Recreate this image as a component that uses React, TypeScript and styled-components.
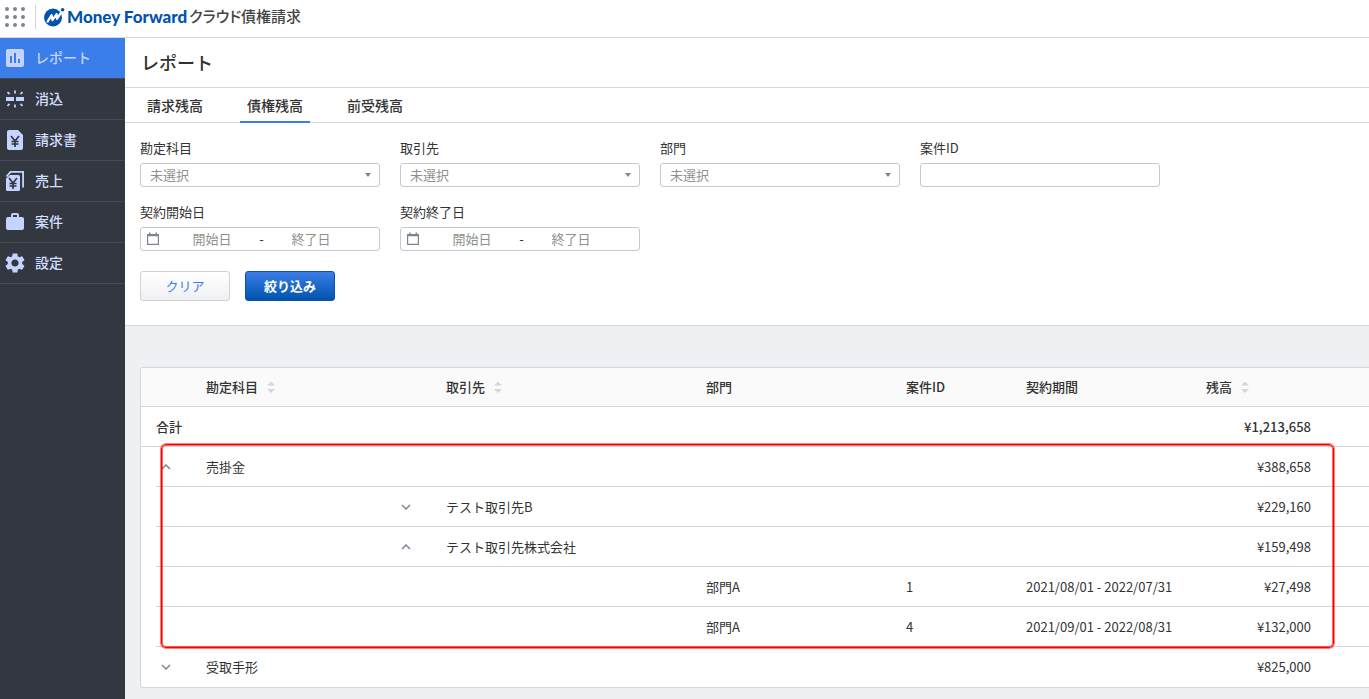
import React from "react";
import styled, { createGlobalStyle } from "styled-components";
import { MdAssessment, MdSettings } from "react-icons/md";

const GlobalStyle = createGlobalStyle`
  *, *::before, *::after { box-sizing: border-box; }
  html, body, #root { height: 100%; }
  body {
    margin: 0;
    overflow: hidden;
    background: #eff0f4;
    color: #333;
    font-family: "Noto Sans CJK JP", "Noto Sans", sans-serif;
    font-size: 13px;
    line-height: 20px;
  }
  button, input, select { font: inherit; color: inherit; }
`;

const Shell = styled.div`
  display: flex;
  flex-direction: column;
  min-height: 100%;
`;

const TopBar = styled.header`
  display: flex;
  align-items: center;
  height: 38px;
  padding: 0 4px 4px;
  background: #fff;
  border-bottom: 1px solid #d4d6db;
`;

const AppsButton = styled.button`
  display: flex;
  padding: 0;
  border: 0;
  background: none;
  svg { fill: #7d8496; }
`;

const Divider = styled.span`
  width: 1px;
  height: 24px;
  margin: 0 8px 0 9px;
  background: #d4d6db;
`;

const Brand = styled.a`
  display: flex;
  align-items: center;
  color: #0054ac;
  text-decoration: none;
`;

const BrandName = styled.span`
  margin: 0 2px;
  font-family: Lato, sans-serif;
  font-size: 17px;
  font-weight: 900;
`;

const ProductName = styled.span`
  padding-bottom: 2px;
  color: #444;
  font-size: 15px;
  font-weight: 500;
  font-feature-settings: "palt";
`;

const Body = styled.div`
  display: flex;
  flex: 1;
`;

const Sidebar = styled.nav`
  flex: 0 0 125px;
  background: #33373f;
`;

const SideLink = styled.a<{ $active?: boolean }>`
  display: flex;
  align-items: center;
  gap: 8px;
  height: 41px;
  padding-left: 3px;
  border-bottom: 1px solid #444953;
  background: ${(p) => (p.$active ? "#3b7de9" : "transparent")};
  color: ${(p) => (p.$active ? "#c5d3ff" : "#d3ddff")};
  font-size: 14px;
  font-weight: 500;
  text-decoration: none;
  svg { flex: none; color: #c5d3ff; }
`;

const SideLabel = styled.span`
  padding-bottom: 2px;
`;

const Main = styled.main`
  flex: 1;
  min-width: 0;
`;

const TitleBar = styled.div`
  padding: 9px 16px 10px;
  background: #fff;
  border-bottom: 1px solid #d4d6db;
`;

const Title = styled.h1`
  margin: 0;
  font-size: 18px;
  font-weight: 500;
  line-height: 30px;
`;

const Tabs = styled.div`
  display: flex;
  gap: 30px;
  height: 35px;
  padding: 0 15px;
  background: #fff;
  border-bottom: 1px solid #d4d6db;
`;

const Tab = styled.button<{ $active?: boolean }>`
  height: 35px;
  padding: 0 7px;
  border: 0;
  border-bottom: 2px solid ${(p) => (p.$active ? "#3b7de9" : "transparent")};
  background: none;
  font-size: 14px;
  font-weight: 500;
`;

const Filters = styled.form`
  padding: 15px 15px 24px;
  background: #fff;
  border-bottom: 1px solid #d4d6db;
`;

const FieldRow = styled.div`
  display: flex;
  flex-wrap: wrap;
  gap: 20px;
  margin-bottom: 15px;
`;

const Field = styled.div`
  display: flex;
  flex-direction: column;
  gap: 5px;
  width: 240px;
`;

const ControlBox = styled.div`
  position: relative;
  display: flex;
  align-items: center;
  height: 24px;
  border: 1px solid #c6c9cf;
  border-radius: 3px;
  background: #fff;
`;

const Select = styled.select`
  width: 100%;
  height: 22px;
  padding: 0 24px 1px 9px;
  border: 0;
  appearance: none;
  background: none;
  color: #8f8f8f;
`;

const SelectArrow = styled.svg`
  position: absolute;
  right: 8px;
  pointer-events: none;
`;

const TextInput = styled.input`
  width: 100%;
  height: 22px;
  padding: 0 9px;
  border: 0;
  background: none;
`;

const RangeBox = styled(ControlBox)`
  padding-left: 6px;
`;

const RangeInput = styled.input`
  width: 80px;
  height: 22px;
  padding: 0 0 2px;
  border: 0;
  background: none;
  text-align: center;
  &:first-of-type { margin-left: 13px; }
  &::placeholder { color: #8f8f8f; opacity: 1; }
`;

const Dash = styled.span`
  width: 19px;
  text-align: center;
`;

const Actions = styled.div`
  display: flex;
  gap: 15px;
  padding-top: 5px;
`;

const Button = styled.button<{ $primary?: boolean }>`
  width: 90px;
  height: 30px;
  padding: 0 0 1px;
  border: 1px solid ${(p) => (p.$primary ? "#0d50ad" : "#d0d2d7")};
  border-radius: 3px;
  background: ${(p) =>
    p.$primary ? "linear-gradient(#3b7de9, #0054ac)" : "linear-gradient(#fff, #eff0f4)"};
  color: ${(p) => (p.$primary ? "#fff" : "#3b7de9")};
  font-weight: ${(p) => (p.$primary ? 700 : 400)};
`;

const TableArea = styled.section`
  position: relative;
  margin: 41px 0 11px 15px;
  border: 1px solid #d4d6db;
  border-right: 0;
  border-radius: 3px 0 0 3px;
  background: #fff;
`;

const Table = styled.table`
  width: 100%;
  table-layout: fixed;
  border-collapse: separate;
  border-spacing: 0;
`;

const HeadCell = styled.th`
  height: 39px;
  padding: 0 0 0 15px;
  border-bottom: 1px solid #d4d6db;
  background: #fafafa;
  font-weight: 500;
  text-align: left;
  white-space: nowrap;
`;

const SortButton = styled.button`
  display: inline-flex;
  align-items: center;
  gap: 8px;
  padding: 0;
  border: 0;
  background: none;
  font-weight: 500;
  svg { fill: #d4d6db; }
`;

const Cell = styled.td<{ $line?: boolean; $flush?: boolean; $amount?: boolean; $strong?: boolean }>`
  height: 40px;
  padding: 0 ${(p) => (p.$amount ? 15 : 0)}px 0 ${(p) => (p.$flush ? 0 : 15)}px;
  border-bottom: ${(p) => (p.$line ? "1px solid #d4d6db" : "0")};
  font-weight: ${(p) => (p.$strong ? 500 : 400)};
  text-align: ${(p) => (p.$amount ? "right" : "left")};
  white-space: nowrap;
`;

const ToggleButton = styled.button`
  display: flex;
  align-items: center;
  justify-content: center;
  width: 20px;
  height: 20px;
  padding: 0;
  border: 0;
  background: none;
`;

const Highlight = styled.div`
  position: absolute;
  top: 76px;
  left: 20px;
  width: 1173px;
  height: 204px;
  border: 1px solid #f00;
  border-radius: 5px;
  box-shadow: 0 0 0 1px rgba(255, 0, 0, 0.5), inset 0 0 0 1px rgba(255, 0, 0, 0.6);
  pointer-events: none;
`;

const LogoMark = () => (
  <svg width="21" height="20" viewBox="0 0 21 20" aria-hidden="true">
    <circle cx="9" cy="10.500" r="9" fill="#0054ac" />
    <path
      d="M3.600 14.600 7.600 8.200 8.400 13.200 12.600 7.200 13 11.800 17 5.600"
      fill="none"
      stroke="#fff"
      strokeWidth="2.200"
      strokeLinejoin="round"
      strokeLinecap="round"
    />
    <circle cx="18.600" cy="2.800" r="1.800" fill="#0054ac" />
  </svg>
);

const YenShape = ({ x, y }: { x: number; y: number }) => (
  <path
    transform={`translate(${x} ${y})`}
    d="M0 0 4 5 8 0M4 5V11M0.5 5.5H7.5M0.5 8H7.5"
    fill="none"
    stroke="#33373f"
    strokeWidth="1.7"
  />
);

const ClearingIcon = () => (
  <svg width="24" height="24" viewBox="0 0 24 24" aria-hidden="true">
    <path d="M3 10h8v4H3zM13 10h8v4h-8z" fill="currentColor" />
    <path
      d="M12 3.500v3M12 17.500v3M4.500 5l2 2.200M19.500 5l-2 2.200M4.500 19l2-2.200M19.500 19l-2-2.200"
      stroke="currentColor"
      strokeWidth="1.8"
    />
  </svg>
);

const InvoiceIcon = () => (
  <svg width="24" height="24" viewBox="0 0 24 24" aria-hidden="true">
    <path d="M6 2h9l5 5v13a2 2 0 0 1-2 2H6a2 2 0 0 1-2-2V4a2 2 0 0 1 2-2z" fill="currentColor" />
    <YenShape x={8} y={8} />
  </svg>
);

const SalesIcon = () => (
  <svg width="24" height="24" viewBox="0 0 24 24" aria-hidden="true">
    <path d="M3.500 7.500 7.500 2.900H20.100V18.500" fill="none" stroke="currentColor" strokeWidth="1.800" />
    <path d="M7 6h8.500a1.500 1.500 0 0 1 1.500 1.500V20.500a1.500 1.500 0 0 1-1.500 1.500H4.500a1.500 1.500 0 0 1-1.500-1.500V9.500z" fill="currentColor" />
    <YenShape x={6} y={9} />
  </svg>
);

const ProjectIcon = () => (
  <svg width="24" height="24" viewBox="0 0 24 24" aria-hidden="true">
    <path
      fillRule="evenodd"
      d="M10 3h4a2 2 0 0 1 2 2v2h3a2 2 0 0 1 2 2v9a2 2 0 0 1-2 2H5a2 2 0 0 1-2-2V9a2 2 0 0 1 2-2h3V5a2 2 0 0 1 2-2zm0 4h4V5h-4z"
      fill="currentColor"
    />
  </svg>
);

const CalendarIcon = () => (
  <svg width="12" height="14" viewBox="0 0 12 14" aria-hidden="true">
    <path d="M.6 2.500h10.800v9.900H.6z" fill="none" stroke="#7d8496" strokeWidth="1.2" />
    <path d="M0 2h12v2.200H0zM2 .5h1.500v2H2zM8.500.5H10v2H8.500z" fill="#7d8496" />
  </svg>
);

const SortIcon = () => (
  <svg width="10" height="12" viewBox="0 0 10 12" aria-hidden="true">
    <path d="M1 4.500 5 .5l4 4zM1 8h8l-4 4z" />
  </svg>
);

const navItems = [
  { label: "レポート", icon: <MdAssessment size={24} /> },
  { label: "消込", icon: <ClearingIcon /> },
  { label: "請求書", icon: <InvoiceIcon /> },
  { label: "売上", icon: <SalesIcon /> },
  { label: "案件", icon: <ProjectIcon /> },
  { label: "設定", icon: <MdSettings size={24} /> },
];

const tabs = ["請求残高", "債権残高", "前受残高"];

const columnWidths = [15, 35, 190, 50, 260, 200, 120, 180, 135];

type Row = {
  account?: string;
  partner?: string;
  department?: string;
  project?: string;
  period?: string;
  amount: string;
  open?: boolean;
};

const rows: Row[] = [
  { account: "売掛金", amount: "¥388,658", open: true },
  { partner: "テスト取引先B", amount: "¥229,160" },
  { partner: "テスト取引先株式会社", amount: "¥159,498", open: true },
  { department: "部門A", project: "1", period: "2021/08/01 - 2022/07/31", amount: "¥27,498" },
  { department: "部門A", project: "4", period: "2021/09/01 - 2022/08/31", amount: "¥132,000" },
  { account: "受取手形", amount: "¥825,000" },
];

const Toggle = ({ open }: { open?: boolean }) => (
  <ToggleButton type="button" aria-label={open ? "閉じる" : "開く"} aria-expanded={!!open}>
    <svg width="10" height="6" viewBox="0 0 10 6" aria-hidden="true">
      <path d={open ? "M1 5l4-4 4 4" : "M1 1l4 4 4-4"} fill="none" stroke="#7d8496" strokeWidth="1.500" />
    </svg>
  </ToggleButton>
);

const SelectField = ({ id, label }: { id: string; label: string }) => (
  <Field>
    <label htmlFor={id}>{label}</label>
    <ControlBox>
      <Select id={id}>
        <option>未選択</option>
      </Select>
      <SelectArrow width="6" height="4" viewBox="0 0 6 4" aria-hidden="true">
        <path d="M0 0h6L3 4z" fill="#7d8496" />
      </SelectArrow>
    </ControlBox>
  </Field>
);

const RangeField = ({ id, label }: { id: string; label: string }) => (
  <Field>
    <label htmlFor={id}>{label}</label>
    <RangeBox>
      <CalendarIcon />
      <RangeInput id={id} placeholder="開始日" />
      <Dash>-</Dash>
      <RangeInput placeholder="終了日" aria-label={`${label} 終了日`} />
    </RangeBox>
  </Field>
);

const SortHead = ({ children }: { children: React.ReactNode }) => (
  <HeadCell scope="col">
    <SortButton type="button">
      {children}
      <SortIcon />
    </SortButton>
  </HeadCell>
);

export default function App() {
  return (
    <Shell>
      <GlobalStyle />
      <TopBar>
        <AppsButton type="button" aria-label="サービス一覧">
          <svg width="22" height="22" viewBox="0 0 22 22" aria-hidden="true">
            {[3, 11, 19].map((y) => [3, 11, 19].map((x) => <circle key={`${x}-${y}`} cx={x} cy={y} r="2" />))}
          </svg>
        </AppsButton>
        <Divider />
        <Brand href="#">
          <LogoMark />
          <BrandName>Money Forward</BrandName>
          <ProductName>クラウド債権請求</ProductName>
        </Brand>
      </TopBar>
      <Body>
        <Sidebar>
          {navItems.map((item, i) => (
            <SideLink key={item.label} href="#" $active={i === 0}>
              {item.icon}
              <SideLabel>{item.label}</SideLabel>
            </SideLink>
          ))}
        </Sidebar>
        <Main>
          <TitleBar>
            <Title>レポート</Title>
          </TitleBar>
          <Tabs role="tablist">
            {tabs.map((tab, i) => (
              <Tab key={tab} type="button" role="tab" aria-selected={i === 1} $active={i === 1}>
                {tab}
              </Tab>
            ))}
          </Tabs>
          <Filters>
            <FieldRow>
              <SelectField id="account" label="勘定科目" />
              <SelectField id="partner" label="取引先" />
              <SelectField id="department" label="部門" />
              <Field>
                <label htmlFor="project">案件ID</label>
                <ControlBox>
                  <TextInput id="project" />
                </ControlBox>
              </Field>
            </FieldRow>
            <FieldRow>
              <RangeField id="start" label="契約開始日" />
              <RangeField id="end" label="契約終了日" />
            </FieldRow>
            <Actions>
              <Button type="reset">クリア</Button>
              <Button type="button" $primary>
                絞り込み
              </Button>
            </Actions>
          </Filters>
          <TableArea>
            <Table>
              <colgroup>
                {columnWidths.map((width, i) => (
                  <col key={i} width={width} />
                ))}
                <col />
              </colgroup>
              <thead>
                <tr>
                  <HeadCell as="td" colSpan={2} />
                  <SortHead>勘定科目</SortHead>
                  <HeadCell as="td" />
                  <SortHead>取引先</SortHead>
                  <HeadCell scope="col">部門</HeadCell>
                  <HeadCell scope="col">案件ID</HeadCell>
                  <HeadCell scope="col">契約期間</HeadCell>
                  <SortHead>残高</SortHead>
                  <HeadCell as="td" />
                </tr>
              </thead>
              <tbody>
                <tr>
                  <Cell $line $strong colSpan={8}>合計</Cell>
                  <Cell $line $strong $amount>¥1,213,658</Cell>
                  <Cell $line />
                </tr>
                {rows.map((row, i) => {
                  const line = i < rows.length - 1;
                  return (
                    <tr key={i}>
                      <Cell $flush />
                      <Cell $line={line} $flush>{row.account && <Toggle open={row.open} />}</Cell>
                      <Cell $line={line}>{row.account}</Cell>
                      <Cell $line={line}>{row.partner && <Toggle open={row.open} />}</Cell>
                      <Cell $line={line}>{row.partner}</Cell>
                      <Cell $line={line}>{row.department}</Cell>
                      <Cell $line={line}>{row.project}</Cell>
                      <Cell $line={line}>{row.period}</Cell>
                      <Cell $line={line} $amount>{row.amount}</Cell>
                      <Cell $line={line} />
                    </tr>
                  );
                })}
              </tbody>
            </Table>
            <Highlight />
          </TableArea>
        </Main>
      </Body>
    </Shell>
  );
}
